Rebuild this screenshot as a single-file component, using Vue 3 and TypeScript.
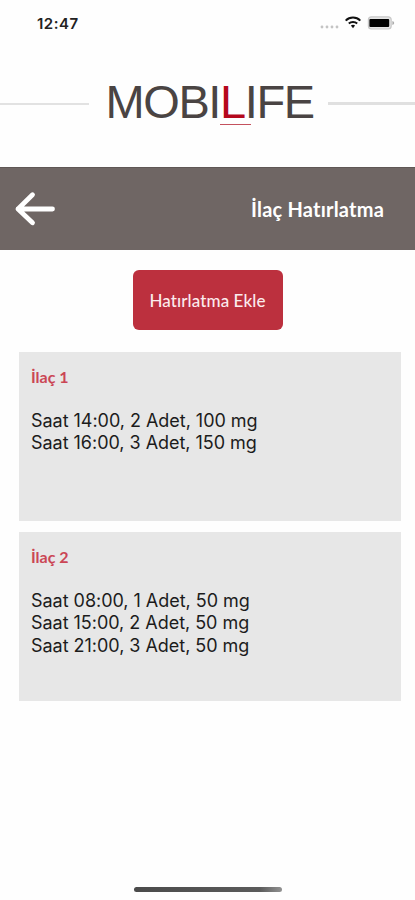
<script setup lang="ts">
interface Reminder {
  title: string
  doses: string[]
}

const reminders: Reminder[] = [
  { title: 'İlaç 1', doses: ['Saat 14:00, 2 Adet, 100 mg', 'Saat 16:00, 3 Adet, 150 mg'] },
  {
    title: 'İlaç 2',
    doses: ['Saat 08:00, 1 Adet, 50 mg', 'Saat 15:00, 2 Adet, 50 mg', 'Saat 21:00, 3 Adet, 50 mg'],
  },
]
</script>

<template>
  <div class="screen">
    <div class="status">
      <span class="time">12:47</span>
      <svg class="indicators" width="76" height="16" viewBox="0 0 76 16">
        <g fill="#c4c4c4">
          <circle cx="3" cy="12" r="1.4" />
          <circle cx="8" cy="12" r="1.4" />
          <circle cx="13" cy="12" r="1.4" />
          <circle cx="18" cy="12" r="1.4" />
        </g>
        <g fill="none" stroke="#111" stroke-width="2">
          <path d="M26.7 5.6a10.4 10.4 0 0 1 14.6 0" />
          <path d="M29.8 8.6a6.1 6.1 0 0 1 8.4 0" />
        </g>
        <path d="M31.9 10.6a3.1 3.1 0 0 1 4.2 0L34 13.3z" fill="#111" />
        <rect x="49.4" y="1.8" width="22.8" height="12.2" rx="3" fill="#e4e4e4" stroke="#c9c9c9" stroke-width="1.2" />
        <rect x="50.4" y="4" width="19.8" height="8" rx="1" fill="#000" />
        <path d="M73.4 6q1.8.6 1.8 2t-1.8 2z" fill="#aaa" />
      </svg>
    </div>

    <div class="brand">
      <span class="rule rule-left"></span>
      <div class="logo">MOBI<span class="accent">L</span>IFE</div>
      <span class="rule rule-right"></span>
    </div>

    <header class="bar">
      <svg width="42" height="36" viewBox="0 0 42 36" fill="none" stroke="#fff" stroke-width="4.8" stroke-linecap="round" stroke-linejoin="round">
        <path d="M38.5 18H4M18.5 3.8L4 18l14.5 13.8" />
      </svg>
      <h1>İlaç Hatırlatma</h1>
    </header>

    <main>
      <button class="add" type="button">Hatırlatma Ekle</button>
      <section v-for="item in reminders" :key="item.title" class="card">
        <h2>{{ item.title }}</h2>
        <p v-for="dose in item.doses" :key="dose">{{ dose }}</p>
      </section>
    </main>

    <div class="home"></div>
  </div>
</template>

<style>
body {
  background: #fefefe;
}
</style>

<style scoped>
.screen {
  display: flex;
  flex-direction: column;
  box-sizing: border-box;
  width: 415px;
  height: 900px;
  background: #fefefe;
  overflow: hidden;
}
.status {
  display: flex;
  justify-content: space-between;
  align-items: flex-start;
  height: 60px;
  box-sizing: border-box;
  padding: 15px 20px 0 37px;
}
.time {
  font: 600 15px/17px Inter, sans-serif;
  letter-spacing: 0.5px;
  color: #222;
}
.brand {
  display: flex;
  height: 107px;
}
.rule {
  height: 2px;
  background: #e2e2e2;
  margin-top: 43px;
}
.rule-left {
  width: 89px;
}
.rule-right {
  width: 87px;
  height: 3px;
  margin-top: 42px;
  background: #e0e0e0;
}
.logo {
  width: 239px;
  box-sizing: border-box;
  padding: 15px 0 0 16.5px;
  font: 47px/54px "Liberation Sans", sans-serif;
  letter-spacing: -1.4px;
  color: #4a4443;
  white-space: nowrap;
}
.accent {
  position: relative;
  color: #b5081c;
}
.accent::after {
  content: "";
  position: absolute;
  left: 0;
  bottom: 3px;
  width: 31px;
  height: 1px;
  background: #c4515e;
}
.bar {
  display: flex;
  align-items: center;
  justify-content: space-between;
  height: 83px;
  box-sizing: border-box;
  padding: 0 31px 0 14px;
  background: #6f6664;
  border-top: 1px solid #5f5755;
}
h1 {
  margin: 0;
  font: 700 20px/24px Lato, sans-serif;
  letter-spacing: 0.2px;
  color: #fff;
}
main {
  display: flex;
  flex-direction: column;
  padding: 20px 14px 0 19px;
}
.add {
  align-self: center;
  margin: 0 0 22px -5px;
  width: 150px;
  height: 60px;
  padding: 2px 0 0;
  border: 0;
  border-radius: 6px;
  background: #bc303e;
  color: #fbebed;
  font: 500 17px/20px Lato, sans-serif;
  letter-spacing: 0.1px;
  white-space: nowrap;
}
.card {
  box-sizing: border-box;
  width: 382px;
  height: 169px;
  margin-bottom: 11px;
  padding: 15px 12px 0;
  background: #e7e7e7;
}
h2 {
  margin: 0 0 23px;
  font: 700 16px/20px Lato, sans-serif;
  color: #cb4655;
}
.card p {
  margin: 0;
  font: 400 18px/22.4px Inter, sans-serif;
  letter-spacing: -0.03px;
  color: #1c1c1c;
  white-space: nowrap;
}
.home {
  width: 148px;
  height: 5px;
  margin: auto 0 8px 134px;
  border-radius: 3px;
  background: linear-gradient(90deg, #4b4b4b, #5b5b5b 85%, #929292);
}
</style>
